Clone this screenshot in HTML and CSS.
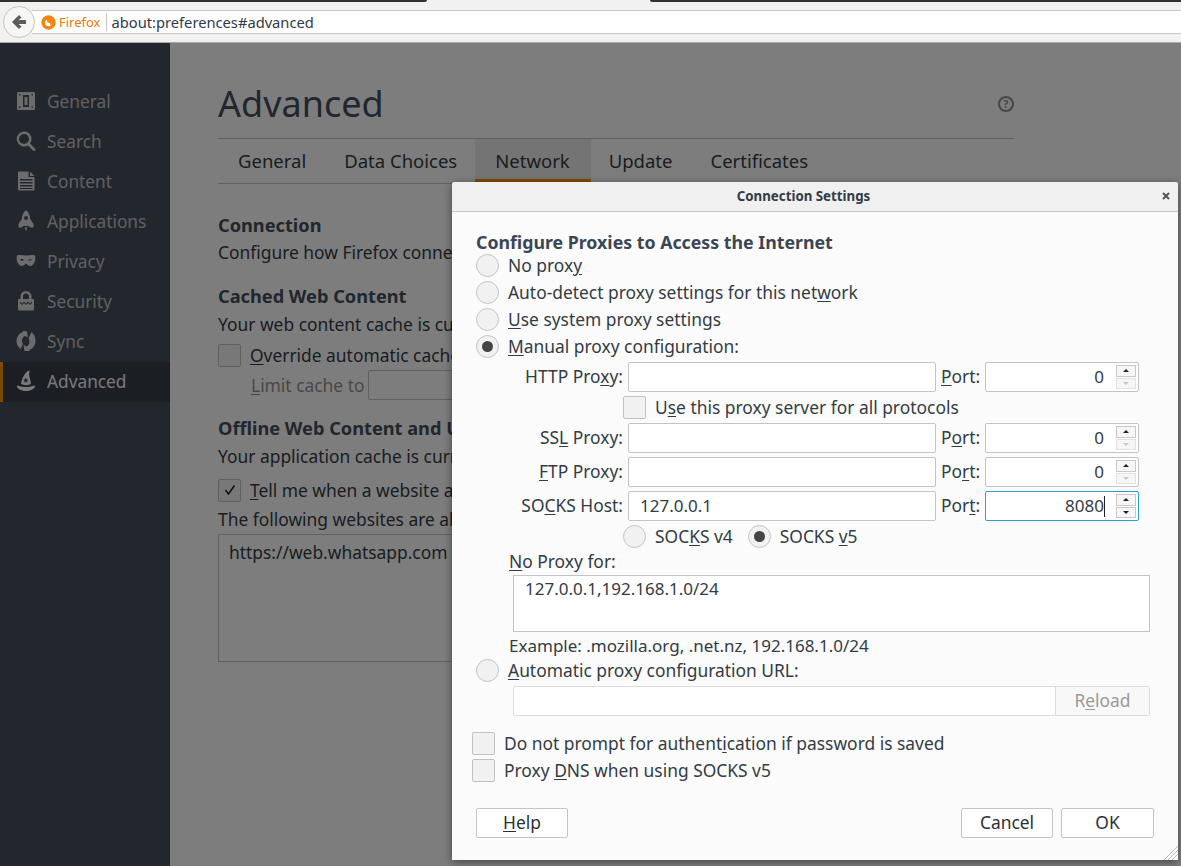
FILE: index.html
```html
<!DOCTYPE html>
<html lang="en">
<head>
  <meta charset="UTF-8">
  <title>about:preferences#advanced</title>
  <link rel="stylesheet" href="styles.css">
</head>
<body>
  <div class="tabstrip">
    <div class="tab-edge left"></div>
    <div class="tab-edge right"></div>
  </div>
  <div class="toolbar">
    <button class="back">
      <svg width="18" height="18" viewBox="0 0 18 18"><path d="M9 2 L2 9 L9 16 L11.500 13.500 L8.600 11 H16 V7 H8.600 L11.500 4.500 Z" fill="#5c5c5c"/></svg>
    </button>
    <div class="urlbar">
      <svg class="fx" width="15" height="15" viewBox="0 0 15 15"><circle cx="7.500" cy="7.500" r="7.200" fill="#f0860f"/><circle cx="7.500" cy="7.800" r="3.400" fill="#fff"/><path d="M6 4.200c2.200-.8 5 .6 5 3.400 0 1.600-1 2.800-2.200 3.200.9-1.200.5-3.200-2.600-3.600z" fill="#f0860f"/></svg>
      <span class="fx-name">Firefox</span>
      <span class="url">about:preferences#advanced</span>
    </div>
  </div>

  <div class="window">
    <nav class="sidebar">
      <div class="nav-item">
        <svg width="18" height="18" viewBox="0 0 18 18"><path fill-rule="evenodd" d="M1.500 0h15A1.500 1.500 0 0 1 18 1.500v15a1.500 1.500 0 0 1-1.500 1.500h-15A1.500 1.500 0 0 1 0 16.500v-15A1.500 1.500 0 0 1 1.500 0zM2 2v1.500h1.500V2zM14.500 2v1.500H16V2zM2 14.500V16h1.500v-1.500zM14.500 14.500V16H16v-1.500zM6 3v12h6V3zM7.500 5h3v8h-3z"/></svg>
        <span>General</span>
      </div>
      <div class="nav-item">
        <svg width="20" height="20" viewBox="0 0 20 20"><path d="M8 0.500a7.500 7.500 0 0 1 6 12l5 5a1.400 1.400 0 0 1-2 2l-5-5A7.500 7.500 0 1 1 8 .5zm0 2.500a5 5 0 1 0 0 10 5 5 0 0 0 0-10z"/></svg>
        <span>Search</span>
      </div>
      <div class="nav-item">
        <svg width="18" height="20" viewBox="0 0 18 20"><path fill-rule="evenodd" d="M2 0.500h9.500v5.500h6v12.500a1 1 0 0 1-1 1H2a1 1 0 0 1-1-1V1.500a1 1 0 0 1 1-1zM13 0.500l4.500 4.500H13zM3 8v1.500h12.500V8zM3 11v1.500h12.500V11zM3 14v1.500h12.500V14zM3 17v1h12.500v-1z"/></svg>
        <span>Content</span>
      </div>
      <div class="nav-item">
        <svg width="18" height="22" viewBox="0 0 18 22"><path fill-rule="evenodd" d="M9 0c3 2.500 4 6 4.200 9l3.300 5v3.500H13l-1-1.500H6l-1 1.500H1.500V14l3.300-5C5 6 6 2.500 9 0zM9 6a2 2 0 1 0 0 4 2 2 0 0 0 0-4zM7.500 17.500h3L9 21z"/></svg>
        <span>Applications</span>
      </div>
      <div class="nav-item">
        <svg width="20" height="13" viewBox="0 0 20 13"><path fill-rule="evenodd" d="M1 1c3-1 6 0 9 0s6-1 9 0c1 3 0 8-3 10-2 1.200-4 .2-6-2-2 2.200-4 3.200-6 2C1 9 0 4 1 1zM4 5c1 1.500 3 1.500 4 .5-1-1-3-1.500-4-.5zM12 5.500c1 1 3 1 4-.5-1-.5-3-.5-4 .5z"/></svg>
        <span>Privacy</span>
      </div>
      <div class="nav-item">
        <svg width="18" height="20" viewBox="0 0 18 20"><path fill-rule="evenodd" d="M9 0a5.500 5.500 0 0 1 5.500 5.500V8H16a1 1 0 0 1 1 1v9.500a1 1 0 0 1-1 1H2a1 1 0 0 1-1-1V9a1 1 0 0 1 1-1h1.500V5.500A5.500 5.500 0 0 1 9 0zm0 2.500a3 3 0 0 0-3 3V8h6V5.500a3 3 0 0 0-3-3zM3 10.500l2 2 2-2 2 2 2-2 2 2 2-2V12l-2 2-2-2-2 2-2-2-2 2-2-2z"/></svg>
        <span>Security</span>
      </div>
      <div class="nav-item">
        <svg width="20" height="20" viewBox="0 0 20 20"><path d="M11 0.500l1 6-3-1.500c-2 .7-3 2.700-3 5 0 1 .3 2 1 3l-2.500 5C2 16 0.500 13 0.500 10c0-4.500 3-8 6.500-9l-1-1.500zM15.500 1c2.500 2 4 5 4 9 0 4.500-3 8-6.500 9l1 1-5.500 0-1-6 3 1.500c2-.7 3-2.700 3-5 0-1-.3-2-1-3z"/></svg>
        <span>Sync</span>
      </div>
      <div class="nav-item active">
        <svg width="20" height="21" viewBox="0 0 20 21"><path fill-rule="evenodd" d="M12 0c-2 2-6 6-7 13.500 3 1.500 7 1.500 10 0-.5-3-1-5-1.500-7.500-.5-2-1-3.500 .5-5zM9.800 7l.8 2 2 .1-1.600 1.200.6 2-1.800-1.100-1.700 1.100.6-2L7 9.100l2-.1zM1 15c2 0 3 1.500 9 1.500S17 15 19 15c.5 3-4 5.500-9 5.500S.5 18 1 15z"/></svg>
        <span>Advanced</span>
      </div>
    </nav>

    <main class="content">
      <div class="page-head">
        <h1>Advanced</h1>
        <span class="help-icon">?</span>
      </div>
      <div class="tabs">
        <span class="tab">General</span>
        <span class="tab">Data Choices</span>
        <span class="tab selected">Network</span>
        <span class="tab">Update</span>
        <span class="tab">Certificates</span>
      </div>

      <h2 class="connection">Connection</h2>
      <p>Configure how Firefox connects to the Internet</p>

      <h2 class="cached">Cached Web Content</h2>
      <p class="gap4">Your web content cache is currently using</p>
      <div class="pref-check"><span class="box"></span><span><u>O</u>verride automatic cache management</span></div>
      <div class="limit"><span class="dim"><u>L</u>imit cache to</span><span class="limit-input">3</span></div>

      <h2 class="offline">Offline Web Content and User Data</h2>
      <p class="gap4">Your application cache is currently using</p>
      <div class="pref-check tell"><span class="box"><svg width="14" height="14" viewBox="0 0 14 14"><path d="M2.500 7l3 4 6-8.500" fill="none" stroke="#222" stroke-width="1.600"/></svg></span><span><u>T</u>ell me when a website asks to store data</span></div>
      <p class="following">The following websites are allowed to store data</p>
      <div class="site-list">https://web.whatsapp.com</div>
    </main>

    <div class="dimmer"></div>
  </div>

  <section class="dialog">
    <header class="dialog-title">
      <span>Connection Settings</span>
      <svg class="close" width="8" height="8" viewBox="0 0 8 8"><path d="M1 1l6 6M7 1L1 7" stroke="#555" stroke-width="2"/></svg>
    </header>
    <div class="dialog-body">
      <h3>Configure Proxies to Access the Internet</h3>
      <label class="radio-row"><span class="radio"></span><span>No prox<u>y</u></span></label>
      <label class="radio-row"><span class="radio"></span><span>Auto-detect proxy settings for this net<u>w</u>ork</span></label>
      <label class="radio-row"><span class="radio"></span><span><u>U</u>se system proxy settings</span></label>
      <label class="radio-row"><span class="radio on"></span><span><u>M</u>anual proxy configuration:</span></label>

      <div class="proxy-grid">
        <span class="field-label">HTTP Pro<u>x</u>y:</span>
        <span class="field"></span>
        <span class="port-label"><u>P</u>ort:</span>
        <span class="port">0<span class="spin"><i class="up"></i><i class="down off"></i></span></span>

        <div class="all-protocols"><span class="box"></span><span>U<u>s</u>e this proxy server for all protocols</span></div>

        <span class="field-label">SS<u>L</u> Proxy:</span>
        <span class="field"></span>
        <span class="port-label">P<u>o</u>rt:</span>
        <span class="port">0<span class="spin"><i class="up"></i><i class="down off"></i></span></span>

        <span class="field-label"><u>F</u>TP Proxy:</span>
        <span class="field"></span>
        <span class="port-label">Po<u>r</u>t:</span>
        <span class="port">0<span class="spin"><i class="up"></i><i class="down off"></i></span></span>

        <span class="field-label">SO<u>C</u>KS Host:</span>
        <span class="field">127.0.0.1</span>
        <span class="port-label">Por<u>t</u>:</span>
        <span class="port focused">8080<b class="caret"></b><span class="spin"><i class="up"></i><i class="down"></i></span></span>

        <div class="socks-version">
          <label class="socks-radio"><span class="radio"></span><span>SOC<u>K</u>S v4</span></label>
          <label class="socks-radio"><span class="radio on"></span><span>SOCKS <u>v</u>5</span></label>
        </div>
      </div>

      <div class="no-proxy">
        <div class="no-proxy-label"><u>N</u>o Proxy for:</div>
        <div class="no-proxy-box">127.0.0.1,192.168.1.0/24</div>
        <div class="example">Example: .mozilla.org, .net.nz, 192.168.1.0/24</div>
      </div>

      <label class="radio-row auto-row"><span class="radio"></span><span><u>A</u>utomatic proxy configuration URL:</span></label>
      <div class="auto-url"><span class="auto-input"></span><span class="reload">R<u>e</u>load</span></div>

      <div class="dialog-check first-check"><span class="box"></span><span>Do not prompt for authent<u>i</u>cation if password is saved</span></div>
      <div class="dialog-check"><span class="box"></span><span>Proxy <u>D</u>NS when using SOCKS v5</span></div>

      <div class="buttons">
        <button class="btn"><u>H</u>elp</button>
        <span class="spacer"></span>
        <button class="btn">Cancel</button>
        <button class="btn ok">OK</button>
      </div>
    </div>
    <svg class="grip" width="14" height="14" viewBox="0 0 14 14"><path d="M0 14L14 0M4 14L14 4M8 14L14 8" stroke="#bbb" stroke-width="1"/></svg>
  </section>
</body>
</html>
```

FILE: styles.css
```css
* {
  box-sizing: border-box;
}
html, body {
  height: 100%;
}
body {
  margin: 0;
  overflow: hidden;
  font-family: "Noto Sans", "Open Sans", sans-serif;
  font-size: 17.400px;
  color: #333b44;
  background: #fbfbfb;
  display: flex;
  flex-direction: column;
}
u {
  text-underline-offset: 2px;
}
p {
  margin: 0;
}

/* browser chrome */
.tabstrip {
  height: 3px;
  flex: none;
  background: #f2f1ef;
  display: flex;
}
.tab-edge {
  height: 2px;
  background: #33322e;
}
.tab-edge.left {
  width: 427px;
  border-bottom-right-radius: 3px;
}
.tab-edge.right {
  flex: 1;
  margin-left: 223px;
  border-bottom-left-radius: 3px;
}
.toolbar {
  height: 40px;
  flex: none;
  background: #f2f1ef;
  border-bottom: 1px solid #a8a8a8;
  display: flex;
  align-items: flex-start;
  padding: 3px 0 0 3px;
}
.back {
  width: 32px;
  height: 32px;
  margin: 0;
  padding: 0;
  border-radius: 50%;
  border: 1px solid #c4c4c4;
  background: #f6f6f5;
  display: flex;
  align-items: center;
  justify-content: center;
  position: relative;
  z-index: 1;
}
.urlbar {
  flex: 1;
  height: 24px;
  margin: 4px 0 0 -3px;
  background: #fff;
  border-top: 1px solid #c8c8c8;
  border-bottom: 1px solid #c8c8c8;
  display: flex;
  align-items: center;
  padding-left: 9px;
}
.fx-name {
  color: #e8790c;
  font-size: 13px;
  margin-left: 3px;
  padding-right: 5px;
  border-right: 1px solid #c8c8c8;
  line-height: 18px;
}
.url {
  font-size: 14.700px;
  margin-left: 5px;
  color: #2f3a48;
}

/* page under the dialog */
.window {
  flex: 1;
  display: flex;
  position: relative;
  min-height: 0;
}
.dimmer {
  position: absolute;
  inset: 0;
  background: rgba(0, 0, 0, 0.5);
}
.sidebar {
  width: 170px;
  flex: none;
  background: #444f5c;
  padding-top: 39px;
}
.nav-item {
  height: 40px;
  display: flex;
  align-items: center;
  color: #c1c1c1;
  font-size: 17.300px;
  position: relative;
  padding: 0 0 2px 47px;
}
.nav-item svg {
  position: absolute;
  left: 26px;
  top: calc(50% - 1px);
  transform: translate(-50%, -50%);
  fill: #d8d8d8;
}
.nav-item.active {
  background: #363e48;
  border-left: 3px solid #ff9500;
  padding-left: 44px;
  color: #f2f2f2;
}
.nav-item.active svg {
  left: 23px;
  fill: #f2f2f2;
}
.content {
  flex: 1;
  padding: 39px 167px 0 48px;
  min-width: 0;
  white-space: nowrap;
  overflow: hidden;
}
.page-head {
  height: 57px;
  border-bottom: 1px solid #c1c1c1;
  display: flex;
  justify-content: space-between;
  align-items: flex-start;
}
h1 {
  margin: 0;
  font-weight: 400;
  font-size: 36px;
  line-height: 44px;
  color: #424e5a;
}
.help-icon {
  width: 16px;
  height: 16px;
  margin-top: 14px;
  border: 2px solid #8c8c8c;
  border-radius: 50%;
  font-size: 10px;
  font-weight: 700;
  color: #8c8c8c;
  text-align: center;
  line-height: 12px;
}
.tabs {
  height: 45px;
  display: flex;
  border-bottom: 1px solid #c1c1c1;
  font-size: 18.500px;
}
.tab {
  padding: 0 19px;
  line-height: 44px;
}
.tab:first-child {
  margin-left: 1px;
}
.tab.selected {
  background: #e8e8e8;
  border-bottom: 3px solid #ff9500;
  height: 43px;
  padding: 0 21px 0 20px;
  margin: 0 -1px;
}
h2 {
  margin: 0;
  font-size: 18.200px;
  font-weight: 700;
  line-height: 24px;
  color: #424e5a;
}
h2.connection {
  margin-top: 29px;
}
h2.cached {
  margin-top: 20px;
}
h2.offline {
  margin-top: 16px;
}
.content p {
  line-height: 24px;
  margin-top: 3px;
}
.content p.gap4 {
  margin-top: 4px;
}
.box {
  width: 23px;
  height: 23px;
  flex: none;
  border: 1px solid #c1c1c1;
  border-radius: 2px;
  background: #f1f1f1;
  display: inline-flex;
  align-items: center;
  justify-content: center;
}
.pref-check {
  display: flex;
  align-items: center;
  gap: 9px;
  margin-top: 7px;
  height: 24px;
}
.limit {
  display: flex;
  align-items: center;
  gap: 3px;
  margin: 3px 0 0 33px;
  height: 30px;
}
.dim {
  color: #909090;
}
.limit-input {
  width: 120px;
  height: 30px;
  border: 1px solid #c1c1c1;
  border-radius: 2px;
  text-align: right;
  color: #909090;
  padding-right: 6px;
}
.pref-check.tell {
  margin-top: 10px;
}
.content p.following {
  margin-top: 5px;
}
.site-list {
  margin-top: 3px;
  height: 128px;
  border: 1px solid #c1c1c1;
  padding: 5px 10px;
}

/* the dialog */
.dialog {
  position: absolute;
  left: 452px;
  top: 182px;
  width: 726px;
  height: 678px;
  background: #fbfbfb;
  border-radius: 3px 3px 0 0;
  box-shadow: 0 2px 8px rgba(0, 0, 0, 0.45);
}
.dialog-title {
  height: 30px;
  background: #f0f0f0;
  border-bottom: 1px solid #c6c6c6;
  border-radius: 3px 3px 0 0;
  display: flex;
  align-items: center;
  justify-content: center;
  font-size: 13.300px;
  font-weight: 700;
  padding: 0 23px 1px 0;
  position: relative;
}
.close {
  position: absolute;
  right: 8px;
  top: 10px;
}
.dialog-body {
  padding: 20px 24px 0;
}
h3 {
  margin: 0;
  font-size: 17.750px;
  line-height: 20px;
  font-weight: 700;
  color: #3b4653;
}
.radio-row {
  display: flex;
  align-items: center;
  gap: 9px;
  height: 27px;
}
/* labels sit a pixel above the middle of the radio or box */
.radio-row > span:last-child,
.dialog-check > span:last-child {
  margin-bottom: 2px;
}
.radio {
  width: 23px;
  height: 23px;
  flex: none;
  border-radius: 50%;
  border: 1px solid #c4c4c4;
  background: #f1f1f1;
  display: inline-flex;
  align-items: center;
  justify-content: center;
}
.radio.on::after {
  content: "";
  width: 11px;
  height: 11px;
  border-radius: 50%;
  background: #444;
}
.proxy-grid {
  display: grid;
  grid-template-columns: 152px 308px 49px 154px;
  grid-template-rows: 30px 31px 34px 34px 30px 30px;
  align-items: start;
  margin-top: 2px;
}
.field-label {
  text-align: right;
  padding-right: 5px;
  white-space: nowrap;
  line-height: 29px;
}
.field {
  height: 30px;
  background: #fff;
  border: 1px solid #c4c4c4;
  border-radius: 2px;
  line-height: 28px;
  padding-left: 11px;
  font-size: 17px;
}
.port-label {
  padding-left: 5px;
  line-height: 29px;
}
.port {
  height: 30px;
  background: #fff;
  border: 1px solid #c4c4c4;
  border-radius: 2px;
  line-height: 28px;
  text-align: right;
  padding-right: 34px;
  position: relative;
  font-size: 17px;
}
.port.focused {
  border-color: #2a9fd8;
}
.caret {
  position: absolute;
  right: 33px;
  top: 4px;
  width: 1px;
  height: 21px;
  background: #222;
}
.spin {
  position: absolute;
  right: 2px;
  top: 2px;
  width: 20px;
  height: 24px;
  display: flex;
  flex-direction: column;
  gap: 1px;
}
.spin i {
  flex: 1;
  border: 1px solid #c8c8c8;
  background: #f6f6f6;
  position: relative;
}
.spin i::after {
  content: "";
  position: absolute;
  left: 6px;
  top: 3px;
  border-left: 3px solid transparent;
  border-right: 3px solid transparent;
}
.spin .up::after {
  border-bottom: 3px solid #222;
}
.spin .down::after {
  border-top: 3px solid #222;
}
.spin .off {
  border-color: #e2e2e2;
}
.spin .off::after {
  border-top-color: #c8c8c8;
}
.all-protocols {
  grid-column: 1 / -1;
  display: flex;
  align-items: center;
  gap: 9px;
  padding-left: 147px;
  height: 30px;
}
.socks-version {
  grid-column: 1 / -1;
  display: flex;
  align-items: center;
  gap: 15px;
  padding-left: 147px;
  height: 30px;
}
.socks-radio {
  display: flex;
  align-items: center;
  gap: 9px;
}
.no-proxy {
  padding-left: 33px;
}
.no-proxy-label {
  line-height: 21px;
  height: 23px;
}
.no-proxy-box {
  margin: 1px 0 0 4px;
  height: 57px;
  width: 637px;
  background: #fff;
  border: 1px solid #c4c4c4;
  padding: 1px 11px;
  line-height: 24px;
  font-size: 17px;
}
.example {
  line-height: 24px;
  margin-top: 2px;
  font-size: 17px;
}
.auto-row {
  margin-top: -1px;
}
.auto-url {
  margin: 2px 0 0 37px;
  width: 637px;
  height: 30px;
  display: flex;
  border: 1px solid #dcdcdc;
  border-radius: 2px;
  background: #fff;
}
.auto-input {
  flex: 1;
}
.reload {
  width: 94px;
  border-left: 1px solid #dcdcdc;
  background: #f8f8f8;
  color: #9a9a9a;
  text-align: center;
  line-height: 26px;
}
.dialog-check {
  display: flex;
  align-items: center;
  gap: 9px;
  height: 27px;
  margin-left: -4px;
}
.first-check {
  margin-top: 14px;
}
.buttons {
  display: flex;
  gap: 8px;
  margin-top: 24px;
}
.spacer {
  flex: 1;
}
.btn {
  width: 92px;
  height: 30px;
  padding: 0 0 2px;
  border: 1px solid #c4c4c4;
  border-radius: 2px;
  background: #fff;
  font: inherit;
  color: #2b3035;
}
.btn.ok {
  width: 93px;
}
.grip {
  position: absolute;
  right: 0;
  bottom: 0;
}
```
